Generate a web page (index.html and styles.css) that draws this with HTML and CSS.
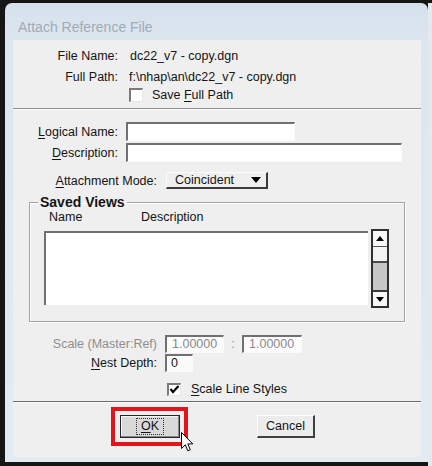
FILE: index.html
```html
<!DOCTYPE html>
<html>
<head>
<meta charset="utf-8">
<title>Attach Reference File</title>
<link rel="stylesheet" href="styles.css">
</head>
<body>
<div class="window">
  <div class="titlebar">Attach Reference File</div>
  <div class="client">
    <div class="info">
      <span class="lbl">File Name:</span><span class="val val1">dc22_v7 - copy.dgn</span>
      <span class="lbl">Full Path:</span><span class="val">f:\nhap\an\dc22_v7 - copy.dgn</span>
      <span></span>
      <span class="chk-row"><span class="chk"></span><span>Save <u>F</u>ull Path</span></span>
    </div>
    <div class="sep"></div>
    <div class="main">
      <div class="row r-logical"><span class="lbl w105"><u>L</u>ogical Name:</span><span class="field f-logical"></span></div>
      <div class="row r-desc"><span class="lbl w105"><u>D</u>escription:</span><span class="field f-desc"></span></div>
      <div class="row r-mode"><span class="lbl w144"><u>A</u>ttachment Mode:</span><span class="dropdown"><span>Coincident</span><span class="arrow"></span></span></div>
      <fieldset class="group">
        <legend>Saved Views</legend>
        <div class="cols"><span>Name</span><span>Description</span></div>
        <div class="listrow">
          <div class="list"></div>
          <div class="scroll">
            <div class="sb-btn sb-up"><span class="tri-up"></span></div>
            <div class="sb-thumb"></div>
            <div class="sb-track"></div>
            <div class="sb-btn sb-down"><span class="tri-down"></span></div>
          </div>
        </div>
      </fieldset>
      <div class="row r-scale"><span class="lbl w144 dis">Scale (Master:Ref)</span><span class="field f-scale">1.00000</span><span class="colon">:</span><span class="field f-scale2">1.00000</span></div>
      <div class="row r-nest"><span class="lbl w144"><u>N</u>est Depth:</span><span class="field f-nest">0</span></div>
      <div class="row r-sls"><span class="chk chk-on"><svg width="11" height="11" viewBox="0 0 11 11"><path d="M1.5 5 L4 8 L9.5 2" fill="none" stroke="#000" stroke-width="2.2"/></svg></span><span><u>S</u>cale Line Styles</span></div>
    </div>
    <div class="sep sep2"></div>
    <div class="buttons">
      <div class="focus-wrap">
        <div class="btn btn-ok"><span class="focus"><u>O</u>K</span></div>
        <svg class="cursor" width="13" height="21" viewBox="0 0 13 21"><path d="M0.5 0.5 L0.5 16.5 L4.3 12.8 L6.8 18.8 L9.3 17.8 L6.8 11.9 L11.8 11.9 Z" fill="#fff" stroke="#000" stroke-width="1"/></svg>
      </div>
      <div class="btn btn-cancel">Cancel</div>
    </div>
  </div>
</div>
</body>
</html>
```
FILE: styles.css
```css
* { box-sizing: border-box; }
html, body { margin: 0; padding: 0; }
body {
  width: 432px;
  height: 466px;
  overflow: hidden;
  background:
    linear-gradient(to bottom, #161616 0, #161616 3px, transparent 3px),
    linear-gradient(to right, #161616 0, #161616 428px, #e4e9ee 428px);
  font-family: "Liberation Sans", Arial, sans-serif;
  font-size: 12.5px;
  color: #141414;
}
u { text-decoration: underline; text-underline-offset: 2px; }

.window {
  margin: 3px 0 0 5px;
  width: 423px;
  height: 459px;
  border-radius: 7px 7px 0 0;
  background: linear-gradient(to bottom, #d6e1ed 0, #dde6ef 40px, #e2eaf2 100%);
  padding: 0 7px 5px 8px;
  display: flex;
  flex-direction: column;
}
.titlebar {
  height: 37px;
  padding: 10px 0 0 5px;
  display: flex;
  align-items: center;
  font-size: 14px;
  color: #a2abb5;
}
.client {
  flex: 1;
  background: #efefef;
  display: flex;
  flex-direction: column;
}

.info {
  height: 68px;
  padding-top: 5px;
  display: grid;
  grid-template-columns: 105px auto;
  grid-template-rows: 21px 21px 15px;
  column-gap: 11px;
  align-items: center;
}
.lbl { text-align: right; white-space: nowrap; }
.val { white-space: nowrap; }
.val1 { margin-left: 1px; }
.chk-row { display: flex; align-items: center; gap: 9px; }
.chk {
  width: 14px;
  height: 14px;
  background: #fff;
  border-top: 2px solid #7a7a7a;
  border-left: 2px solid #7a7a7a;
  border-right: 1px solid #e6e6e6;
  border-bottom: 1px solid #e6e6e6;
  display: flex;
  align-items: center;
  justify-content: center;
}

.sep {
  height: 2px;
  border-top: 1px solid #8f8f8f;
  border-bottom: 1px solid #fdfdfd;
}
.sep2 { border-top-color: #6a6a6a; }

.main {
  height: 291px;
  display: flex;
  flex-direction: column;
}
.row { display: flex; align-items: center; }
.w105 { width: 105px; margin-right: 8px; }
.w144 { width: 144px; }
.field {
  background: #fff;
  border-top: 2px solid #707070;
  border-left: 2px solid #707070;
  border-right: 1px solid #fafafa;
  border-bottom: 1px solid #fafafa;
  height: 19px;
}
.r-logical { margin-top: 12px; }
.r-desc { margin-top: 2px; }
.f-logical { width: 169px; }
.f-desc { width: 276px; }

.r-mode { margin-top: 10px; height: 17px; }
.dropdown {
  margin-left: 9px;
  width: 102px;
  height: 17px;
  padding: 0 5px 0 8px;
  border-top: 1px solid #fcfcfc;
  border-left: 1px solid #fcfcfc;
  border-right: 2px solid #3a3a3a;
  border-bottom: 2px solid #3a3a3a;
  display: flex;
  align-items: center;
  justify-content: space-between;
}
.arrow {
  width: 0;
  height: 0;
  border-left: 5px solid transparent;
  border-right: 5px solid transparent;
  border-top: 6px solid #000;
}

.group {
  margin: 5px 16px 0 16px;
  padding: 0 0 13px 0;
  min-width: 0;
  border: 1px solid #a3a3a3;
  box-shadow: inset 1px 1px 0 #fff, 1px 1px 0 #fff;
}
.group legend {
  margin-left: 8px;
  padding: 0 2px;
  font-weight: bold;
  font-size: 14px;
  line-height: 16px;
}
.cols {
  height: 15px;
  line-height: 15px;
  display: grid;
  grid-template-columns: 92px auto;
  padding-left: 19px;
}
.listrow {
  margin-top: 4px;
  height: 79px;
  padding-left: 14px;
  display: flex;
  align-items: flex-start;
}
.list {
  margin-top: 2px;
  width: 324px;
  height: 74px;
  background: #fff;
  border-top: 2px solid #707070;
  border-left: 2px solid #707070;
}
.scroll {
  margin-left: 3px;
  width: 18px;
  height: 79px;
  border: 2px solid #303030;
  display: flex;
  flex-direction: column;
  background: #c6c6c6;
}
.sb-btn {
  height: 16px;
  background: #f7f7f7;
  display: flex;
  align-items: center;
  justify-content: center;
}
.sb-up { border-bottom: 1px solid #555; }
.sb-down { border-top: 2px solid #3a3a3a; }
.tri-up {
  border-left: 4px solid transparent;
  border-right: 4px solid transparent;
  border-bottom: 5px solid #000;
}
.tri-down {
  border-left: 4px solid transparent;
  border-right: 4px solid transparent;
  border-top: 5px solid #000;
}
.sb-thumb {
  height: 16px;
  background: #f3f3f3;
  border-bottom: 2px solid #4a4a4a;
}
.sb-track { flex: 1; background: #c6c6c6; }

.dis { color: #8e8e8e; }
.r-scale { margin-top: 13px; }
.f-scale, .f-scale2, .f-nest {
  height: 18px;
  line-height: 15px;
  color: #8a8a8a;
  background: #fbfbfb;
}
.f-scale { margin-left: 8px; width: 59px; padding-left: 5px; }
.colon { width: 18px; text-align: center; color: #8e8e8e; }
.f-scale2 { width: 60px; padding-left: 5px; }
.r-nest { margin-top: 1px; }
.f-nest { margin-left: 8px; width: 28px; padding-left: 4px; color: #141414; }
.r-sls { margin-top: 10px; padding-left: 154px; gap: 10px; }
.chk-on { width: 14px; height: 13px; }

.buttons {
  flex: 1;
  padding: 4px 0 0 98px;
  display: flex;
  align-items: flex-start;
}
.focus-wrap {
  position: relative;
  border: 4px solid #e3151b;
  padding: 4px 4px 4px 5px;
}
.btn {
  height: 23px;
  display: flex;
  align-items: center;
  justify-content: center;
}
.btn-ok {
  width: 60px;
  border: 1px solid #262626;
  background: #d9d9d9;
  box-shadow: inset -1px -1px 0 #8a8a8a, inset 1px 1px 0 #f6f6f6;
}
.focus {
  border: 1px dotted #333;
  padding: 1px 4px;
  line-height: 13px;
}
.cursor {
  position: absolute;
  left: 66px;
  top: 21px;
}
.btn-cancel {
  margin: 8px 0 0 69px;
  width: 58px;
  background: #ececec;
  border-top: 1px solid #fdfdfd;
  border-left: 1px solid #fdfdfd;
  border-right: 2px solid #404040;
  border-bottom: 2px solid #404040;
}
```
